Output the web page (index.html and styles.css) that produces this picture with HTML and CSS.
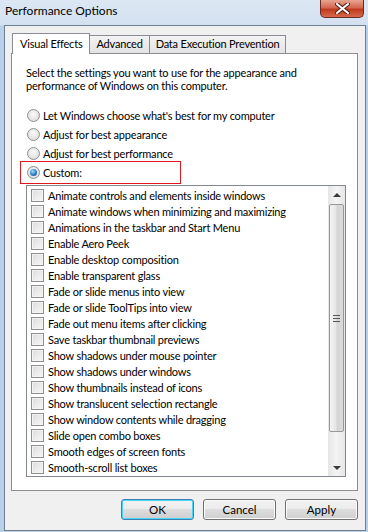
FILE: index.html
```html
<!DOCTYPE html>
<html lang="en">
<head>
  <meta charset="UTF-8" />
  <title>Performance Options</title>
  <link rel="stylesheet" href="styles.css">
</head>
<body>
  <div class="window">
    <div class="titlebar">
      <span class="title">Performance Options</span>
      <button class="close" aria-label="Close">
        <svg width="15" height="11" viewBox="0 0 15 11">
          <path d="M2 1 L13 10 M13 1 L2 10" stroke="#4a1a12" stroke-width="4" stroke-linecap="square" />
          <path d="M2 1 L13 10 M13 1 L2 10" stroke="#fff" stroke-width="2" stroke-linecap="square" />
        </svg>
      </button>
    </div>

    <div class="client">
      <div class="tabs">
        <div class="tab active">Visual Effects</div>
        <div class="tab">Advanced</div>
        <div class="tab">Data Execution Prevention</div>
      </div>

      <div class="panel">
        <p class="intro">Select the settings you want to use for the appearance and performance of Windows on this computer.</p>

        <div class="options">
          <label class="radio"><span class="dot"></span>Let Windows choose what's best for my computer</label>
          <label class="radio"><span class="dot"></span>Adjust for best appearance</label>
          <label class="radio"><span class="dot"></span>Adjust for best performance</label>
          <label class="radio checked highlight"><span class="dot"></span>Custom:</label>
        </div>

        <div class="listbox">
          <ul class="items">
            <li><span class="box"></span>Animate controls and elements inside windows</li>
            <li><span class="box"></span>Animate windows when minimizing and maximizing</li>
            <li><span class="box"></span>Animations in the taskbar and Start Menu</li>
            <li><span class="box"></span>Enable Aero Peek</li>
            <li><span class="box"></span>Enable desktop composition</li>
            <li><span class="box"></span>Enable transparent glass</li>
            <li><span class="box"></span>Fade or slide menus into view</li>
            <li><span class="box"></span>Fade or slide ToolTips into view</li>
            <li><span class="box"></span>Fade out menu items after clicking</li>
            <li><span class="box"></span>Save taskbar thumbnail previews</li>
            <li><span class="box"></span>Show shadows under mouse pointer</li>
            <li><span class="box"></span>Show shadows under windows</li>
            <li><span class="box"></span>Show thumbnails instead of icons</li>
            <li><span class="box"></span>Show translucent selection rectangle</li>
            <li><span class="box"></span>Show window contents while dragging</li>
            <li><span class="box"></span>Slide open combo boxes</li>
            <li><span class="box"></span>Smooth edges of screen fonts</li>
            <li><span class="box"></span>Smooth-scroll list boxes</li>
          </ul>
          <div class="scrollbar">
            <div class="arrow up"></div>
            <div class="thumb"><span class="grip"></span></div>
            <div class="arrow down"></div>
          </div>
        </div>
      </div>

      <div class="buttons">
        <button class="btn default">OK</button>
        <button class="btn">Cancel</button>
        <button class="btn">Apply</button>
      </div>
    </div>
  </div>
</body>
</html>
```

FILE: styles.css
```css
* {
  margin: 0;
  padding: 0;
  box-sizing: border-box;
  font-family: Lato, 'Noto Sans', sans-serif;
}

body {
  width: 368px;
  height: 532px;
  overflow: hidden;
  background: #b8d0ea;
  font-size: 11px;
  letter-spacing: -0.2px;
  color: #000;
}

.window {
  display: flex;
  flex-direction: column;
  height: 532px;
  background: linear-gradient(to bottom, #dce7f3 0, #d3e1f0 25px, #b8d0ea 26px, #b8d0ea 100%);
}

.titlebar {
  height: 25px;
  display: flex;
  align-items: flex-start;
  justify-content: space-between;
  padding-left: 5px;
}

.title {
  font-size: 12px;
  letter-spacing: 0;
  line-height: 22px;
}

.close {
  width: 44px;
  height: 18px;
  margin-right: 4px;
  border: 1px solid #6b2a22;
  border-top: none;
  border-radius: 0 0 5px 5px;
  background: linear-gradient(to bottom, #e8a493 0, #d4674f 45%, #c0391e 55%, #d56a4c 100%);
  display: flex;
  align-items: center;
  justify-content: center;
}

.client {
  flex: 1;
  margin: 0 2px 1px 4px;
  border: 1px solid #6f7f92;
  background: #f0f0f0;
  padding: 7px 7px 0 6px;
  display: flex;
  flex-direction: column;
}

.tabs {
  display: flex;
  align-items: flex-end;
  padding-left: 1px;
  height: 20px;
  position: relative;
  z-index: 1;
}

.tab {
  white-space: nowrap;
  height: 18px;
  line-height: 16px;
  padding: 0 6px;
  border: 1px solid #898c95;
  border-bottom: none;
  background: linear-gradient(to bottom, #f3f3f3, #e3e3e3);
  margin-right: -1px;
}

.tab.active {
  height: 21px;
  line-height: 19px;
  background: #fff;
  margin-bottom: -1px;
  padding: 0 7px;
}

.panel {
  width: 347px;
  height: 438px;
  border: 1px solid #898c95;
  background: #fff;
  padding: 12px 0 0 14px;
}

.intro {
  line-height: 13px;
  width: 300px;
}

.options {
  margin-top: 14px;
  display: flex;
  flex-direction: column;
}

.radio {
  white-space: nowrap;
  height: 19px;
  display: flex;
  align-items: center;
  gap: 3px;
  padding-left: 1px;
}

.dot {
  width: 13px;
  height: 13px;
  border-radius: 50%;
  border: 1px solid #8e8f8f;
  background: radial-gradient(circle at 50% 40%, #fbfbfb 0, #e0e0e0 70%);
  display: flex;
  align-items: center;
  justify-content: center;
}

.radio.checked .dot::after {
  content: "";
  width: 7px;
  height: 7px;
  border-radius: 50%;
  background: radial-gradient(circle at 40% 35%, #a9ddfb 0, #2a7fc4 55%, #134a85 100%);
}

.highlight {
  outline: 1px solid #e0171f;
  width: 159px;
  height: 21px;
  margin-left: -5px;
  padding-left: 6px;
  margin-top: -1px;
}

.listbox {
  margin-top: 2px;
  width: 320px;
  height: 292px;
  border: 1px solid #828790;
  display: flex;
  justify-content: space-between;
}

.items {
  list-style: none;
  padding: 1px 0 0 4px;
}

.items li {
  white-space: nowrap;
  height: 16px;
  display: flex;
  align-items: center;
  gap: 4px;
}

.box {
  width: 13px;
  height: 13px;
  border: 1px solid #8e8f8f;
  background: linear-gradient(135deg, #dcdcdc, #f7f7f7);
  box-shadow: inset 0 0 0 1px #f4f4f4;
}

.scrollbar {
  width: 17px;
  display: flex;
  flex-direction: column;
  background: linear-gradient(to right, #e6e6e6, #f4f4f4 50%, #e6e6e6);
}

.arrow {
  height: 17px;
  display: flex;
  align-items: center;
  justify-content: center;
}

.arrow::after {
  content: "";
  border-left: 4px solid transparent;
  border-right: 4px solid transparent;
}

.arrow.up::after {
  border-bottom: 4px solid #3c3c3c;
}

.arrow.down {
  margin-top: auto;
}

.arrow.down::after {
  border-top: 4px solid #3c3c3c;
}

.thumb {
  margin: 1px 1px 0 1px;
  height: 228px;
  border: 1px solid #979797;
  border-radius: 2px;
  background: linear-gradient(to right, #f4f4f4, #e6e6e6 45%, #d4d4d4 55%, #dcdcdc);
  display: flex;
  align-items: center;
  justify-content: center;
}

.grip {
  width: 7px;
  height: 7px;
  border-top: 1px solid #555;
  border-bottom: 1px solid #555;
  background: linear-gradient(to bottom, transparent 2px, #555 2px, #555 3px, transparent 3px);
}

.buttons {
  display: flex;
  justify-content: flex-end;
  gap: 9px;
  padding-top: 8px;
}

.btn {
  width: 73px;
  height: 21px;
  font-size: 11.5px;
  letter-spacing: 0;
  border: 1px solid #707070;
  border-radius: 3px;
  background: linear-gradient(to bottom, #f2f2f2 0, #ebebeb 50%, #dddddd 50%, #cfcfcf 100%);
  box-shadow: inset 0 0 0 1px #fcfcfc;
  color: #000;
}

.btn.default {
  border-color: #3c7fb1;
  box-shadow: inset 0 0 0 1px #48d6fb;
}
```
